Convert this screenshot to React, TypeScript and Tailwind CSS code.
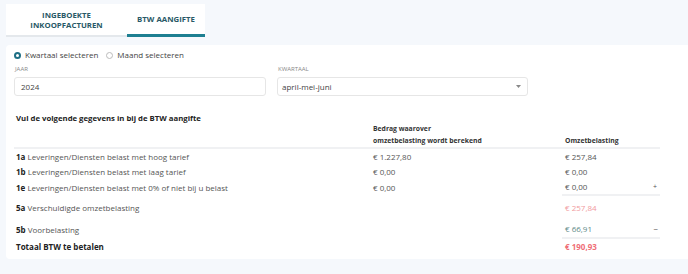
// BTW aangifte overzicht
import React from "react";

type Row = { code: string; label: string; base: string; tax: string; sign?: string; last?: boolean };

const rows: Row[] = [
  { code: "1a", label: "Leveringen/Diensten belast met hoog tarief", base: "€ 1.227,80", tax: "€ 257,84" },
  { code: "1b", label: "Leveringen/Diensten belast met laag tarief", base: "€ 0,00", tax: "€ 0,00" },
  { code: "1e", label: "Leveringen/Diensten belast met 0% of niet bij u belast", base: "€ 0,00", tax: "€ 0,00", sign: "+", last: true },
];

export default function App() {
  return (
    <div className="w-[688px] h-[274px] bg-[#f5f8fc] pt-1 pl-1.5 overflow-hidden text-[#333] font-['Open_Sans',sans-serif]">
      {/* tabs */}
      <div className="flex">
        <div className="w-[121px] h-[33px] bg-white border-b-2 border-[#e4e8ec] flex items-center justify-center text-center text-[7.8px] font-bold leading-[10px] text-[#285866]">
          INGEBOEKTE
          <br />
          INKOOPFACTUREN
        </div>
        <div className="w-[78px] h-[33px] bg-white border-b-[3px] border-[#1e7f91] flex items-center justify-center text-[7.8px] font-bold leading-[10px] text-[#285866]">
          BTW AANGIFTE
        </div>
      </div>

      {/* card */}
      <div className="mt-2 bg-white h-[214px] px-2 pt-[5px] rounded-l-sm">
        <div className="flex items-center gap-2 h-[10px] text-[8px] leading-[10px] text-[#444]">
          <label className="flex items-center gap-1">
            <span className="w-[7px] h-[7px] rounded-full border-[2px] border-[#1e6f85]" />
            Kwartaal selecteren
          </label>
          <label className="flex items-center gap-1">
            <span className="w-[7px] h-[7px] rounded-full border border-[#bbb]" />
            Maand selecteren
          </label>
        </div>

        <div className="flex gap-[11px] mt-[5px]">
          <div className="w-[252px]">
            <div className="text-[6px] leading-[8px] text-[#888] pl-px">JAAR</div>
            <div className="mt-[4px] h-[19px] border border-[#e6e6e6] rounded-[3px] flex items-center pl-1.5 text-[8px] leading-[10px] text-[#444]">2024</div>
          </div>
          <div className="w-[251px]">
            <div className="text-[6px] leading-[8px] text-[#888] pl-px">KWARTAAL</div>
            <div className="mt-[4px] h-[19px] border border-[#e6e6e6] rounded-[3px] flex items-center justify-between pl-1 pr-1.5 text-[8px] leading-[10px] text-[#444]">
              april-mei-juni
              <svg width="5" height="3" viewBox="0 0 5 3"><path d="M0 0h5L2.5 3z" fill="#888" /></svg>
            </div>
          </div>
        </div>

        <div className="mt-[17px] pl-0.5 text-[7.75px] leading-[10px] font-bold text-[#222]">Vul de volgende gegevens in bij de BTW aangifte</div>

        {/* header */}
        <div className="w-[646px] flex items-end border-b-2 border-[#f0f1f3] text-[6.8px] font-bold leading-[12px] text-[#333]">
          <div className="w-[359px]" />
          <div className="w-[189px]">
            Bedrag waarover
            <br />
            omzetbelasting wordt berekend
          </div>
          <div className="flex-1 pl-[3px]">Omzetbelasting</div>
        </div>

        {rows.map((r) => (
          <div key={r.code} className={"w-[646px] flex items-center text-[8px] leading-[10px] text-[#555] " + (r.last ? "h-[17px]" : "h-[15px]")}>
            <div className="w-[359px] pl-0.5">
              <span className="font-bold text-[#222]">{r.code}</span> {r.label}
            </div>
            <div className="w-[189px]">{r.base}</div>
            <div className={"flex-1 flex justify-between h-full items-center pl-[3px] pr-[3px]" + (r.last ? " border-b-2 border-[#f0f1f3]" : "")}>
              <span>{r.tax}</span>
              <span className="text-[7px]">{r.sign}</span>
            </div>
          </div>
        ))}

        <div className="w-[646px] flex items-center h-[24px] text-[8px] leading-[10px] text-[#555]">
          <div className="w-[548px] pl-0.5">
            <span className="font-bold text-[#222]">5a</span> Verschuldigde omzetbelasting
          </div>
          <div className="flex-1 pl-[3px] text-[#f19a9e]">€ 257,84</div>
        </div>
        <div className="w-[646px] flex items-center h-[19px] text-[8px] leading-[10px] text-[#555]">
          <div className="w-[548px] pl-0.5">
            <span className="font-bold text-[#222]">5b</span> Voorbelasting
          </div>
          <div className="flex-1 flex justify-between h-full items-center border-b-2 border-[#f0f1f3] pl-[3px] pr-[2px]">
            <span className="text-[#5e8a88]">€ 66,91</span>
            <span>−</span>
          </div>
        </div>
        <div className="w-[646px] flex items-center h-[16px] text-[8px] leading-[10px]">
          <div className="w-[548px] pl-0.5 font-bold text-[#222]">Totaal BTW te betalen</div>
          <div className="flex-1 pl-[3px] font-bold text-[#ef6f78]">€ 190,93</div>
        </div>
      </div>
    </div>
  );
}
